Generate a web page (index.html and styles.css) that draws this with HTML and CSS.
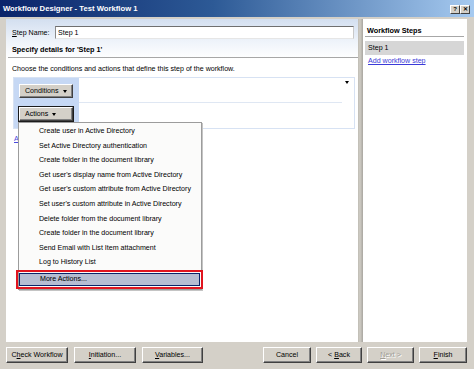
FILE: index.html
```html
<!DOCTYPE html>
<html lang="en">
<head>
    <meta charset="UTF-8">
    <meta name="viewport" content="width=device-width, initial-scale=1.0">
    <title>Workflow Designer - Test Workflow 1</title>
    <link rel="stylesheet" href="styles.css">
</head>
<body>
    <div class="window">
        <div class="titlebar">
            <span class="title">Workflow Designer - Test Workflow 1</span>
            <div class="title-buttons">
                <span class="tbtn">?</span>
                <span class="tbtn close">&#x2715;</span>
            </div>
        </div>

        <div class="main">
            <div class="left-panel">
                <div class="name-row">
                    <label for="stepName"><u>S</u>tep Name:</label>
                    <input type="text" id="stepName" value="Step 1">
                </div>

                <div class="section-title">Specify details for 'Step 1'</div>
                <div class="hint">Choose the conditions and actions that define this step of the workflow.</div>

                <div class="rule-box">
                    <div class="rule-side">
                        <button class="drop-btn">Conditions <span class="tri"></span></button>
                        <button class="drop-btn focused">Actions <span class="tri"></span></button>
                    </div>
                    <div class="rule-body">
                        <div class="rule-row first"><span class="tri row-arrow"></span></div>
                        <div class="rule-row"></div>
                    </div>
                </div>

                <a class="branch-link" href="#">Add 'Else If' Conditional Branch</a>

                <!-- Actions dropdown menu -->
                <div class="menu">
                    <div class="menu-item">Create user in Active Directory</div>
                    <div class="menu-item">Set Active Directory authentication</div>
                    <div class="menu-item">Create folder in the document library</div>
                    <div class="menu-item">Get user's display name from Active Directory</div>
                    <div class="menu-item">Get user's custom attribute from Active Directory</div>
                    <div class="menu-item">Set user's custom attribute in Active Directory</div>
                    <div class="menu-item">Delete folder from the document library</div>
                    <div class="menu-item">Create folder in the document library</div>
                    <div class="menu-item">Send Email with List Item attachment</div>
                    <div class="menu-item">Log to History List</div>
                    <div class="menu-item more">More Actions...</div>
                </div>
            </div>

            <div class="splitter"></div>

            <div class="right-panel">
                <div class="steps-title">Workflow Steps</div>
                <div class="step-item">Step 1</div>
                <a class="add-step" href="#">Add workflow step</a>
            </div>
        </div>

        <div class="footer">
            <div class="btn-group">
                <button class="btn w62">C<u>h</u>eck Workflow</button>
                <button class="btn w62"><u>I</u>nitiation...</button>
                <button class="btn w61"><u>V</u>ariables...</button>
            </div>
            <div class="btn-group">
                <button class="btn w48">Cancel</button>
                <button class="btn w46">&lt; <u>B</u>ack</button>
                <button class="btn w47" disabled><u>N</u>ext &gt;</button>
                <button class="btn w48"><u>F</u>inish</button>
            </div>
        </div>
    </div>
</body>
</html>
```

FILE: styles.css
```css
body {
    margin: 0;
    padding: 0;
    font-family: "Liberation Sans", Arial, sans-serif;
    font-size: 7.1px;
    color: #000;
    overflow: hidden;
}

.window {
    width: 474px;
    height: 369px;
    background-color: #d4d0c8;
    display: flex;
    flex-direction: column;
}

.titlebar {
    height: 17px;
    background: linear-gradient(to right, #0a246a 0%, #2d5a96 45%, #a6caf0 100%);
    display: flex;
    align-items: center;
    justify-content: space-between;
    padding: 0 4px 0 3px;
}

.title {
    color: #fff;
    font-weight: bold;
    font-size: 7.7px;
}

.title-buttons {
    display: flex;
    margin-top: 1px;
}

.tbtn {
    width: 10px;
    height: 9px;
    background-color: #d4d0c8;
    border: 1px solid;
    border-color: #fff #404040 #404040 #fff;
    box-sizing: border-box;
    font-size: 6px;
    font-weight: bold;
    line-height: 7px;
    text-align: center;
}

.main {
    height: 323px;
    margin-top: 2px;
    padding: 0 7px 0 6px;
    display: flex;
}

.left-panel {
    position: relative;
    width: 352px;
    background: linear-gradient(#d3dff0 0px, #eef3fa 22px, #fff 40px);
}

.name-row {
    display: flex;
    align-items: center;
    padding: 7px 0 0 6px;
}

.name-row label {
    width: 43px;
}

.name-row input {
    width: 299px;
    height: 13px;
    box-sizing: border-box;
    border: 1px solid;
    border-color: #6f6f6f #c9c9c9 #e6e6e6 #8a8a8a;
    padding: 0 2px;
    font-family: inherit;
    font-size: 7.1px;
    outline: none;
}

.section-title {
    font-weight: bold;
    font-size: 7.3px;
    margin: 6px 0 0 2px;
    padding: 0 0 2px 4px;
    line-height: 10px;
    border-bottom: 1px solid #a7a7a7;
}

.hint {
    margin: 6px 0 0 6px;
    line-height: 10px;
}

.rule-box {
    margin: 3px 0 0 7px;
    width: 340px;
    height: 50px;
    border: 1px solid #d7e2f3;
    display: flex;
}

.rule-side {
    width: 65px;
    background-color: #c6d8f4;
    display: flex;
    flex-direction: column;
    gap: 9px;
    padding: 6px 0 0 5px;
    box-sizing: border-box;
}

.drop-btn {
    width: 54px;
    height: 14px;
    box-sizing: border-box;
    background-color: #d4d0c8;
    border: 1px solid;
    border-color: #fff #404040 #404040 #fff;
    box-shadow: inset -1px -1px 0 #808080;
    font-family: inherit;
    font-size: 7.1px;
    text-align: left;
    padding: 0 0 0 5px;
    display: flex;
    align-items: center;
    gap: 4px;
}

.drop-btn.focused {
    outline: 1px solid #1c1c1c;
}

.tri {
    display: inline-block;
    width: 0;
    height: 0;
    border-left: 2.5px solid transparent;
    border-right: 2.5px solid transparent;
    border-top: 3px solid #000;
}

.rule-body {
    flex: 1;
    display: flex;
    flex-direction: column;
}

.rule-row {
    height: 24px;
    margin-right: 12px;
    position: relative;
}

.rule-row.first {
    border-bottom: 1px solid #dfe7f3;
}

.row-arrow {
    position: absolute;
    right: -7px;
    top: 3px;
}

.branch-link {
    display: block;
    margin: 5px 0 0 8px;
    color: #4a4adc;
    line-height: 10px;
}

.menu {
    position: absolute;
    left: 12px;
    top: 103px;
    width: 184px;
    height: 168px;
    box-sizing: border-box;
    background-color: #fbfbfa;
    border: 1px solid #9c9c9c;
    box-shadow: 1px 1px 0 #c4c4c4;
    padding-top: 1px;
}

.menu-item {
    height: 14.6px;
    line-height: 14.6px;
    padding-left: 20px;
}

.menu-item.more {
    height: 13px;
    line-height: 11px;
    margin: 3px 1px 0 0;
    box-sizing: border-box;
    background-color: #b6bdd2;
    border: 1px solid #0a246a;
    outline: 2px solid #e0141e;
    outline-offset: 1px;
}

.splitter {
    width: 5px;
    background: linear-gradient(to right, #bfbcb4, #cfccc4 40%, #a9a6a0 100%);
}

.right-panel {
    width: 104px;
    background-color: #fff;
    padding: 7px 3px 0 2px;
    box-sizing: border-box;
}

.steps-title {
    font-weight: bold;
    font-size: 7.3px;
    line-height: 10px;
    padding-left: 2px;
    border-bottom: 1px solid #a7a7a7;
}

.step-item {
    margin-top: 4px;
    height: 14px;
    line-height: 14px;
    padding-left: 3px;
    background-color: #d6d6d6;
}

.add-step {
    display: block;
    padding-left: 3px;
    line-height: 10px;
    margin-top: 1px;
    color: #3b3bd8;
}

.footer {
    flex: 1;
    display: flex;
    justify-content: space-between;
    padding: 5px 7px 0 6px;
}

.btn-group {
    display: flex;
    gap: 5px;
    height: 16px;
}

.btn {
    height: 16px;
    box-sizing: border-box;
    background-color: #d4d0c8;
    border: 1px solid;
    border-color: #fff #404040 #404040 #fff;
    box-shadow: inset -1px -1px 0 #808080;
    font-family: inherit;
    font-size: 7.1px;
    color: #000;
    padding: 0;
}

.btn:disabled {
    color: #a09d96;
    text-shadow: 1px 1px 0 #fff;
}

.btn-group:first-child {
    gap: 6px;
}

.w46 { width: 46px; }
.w47 { width: 47px; }
.w48 { width: 48px; }
.w61 { width: 61px; }
.w62 { width: 62px; }
```
